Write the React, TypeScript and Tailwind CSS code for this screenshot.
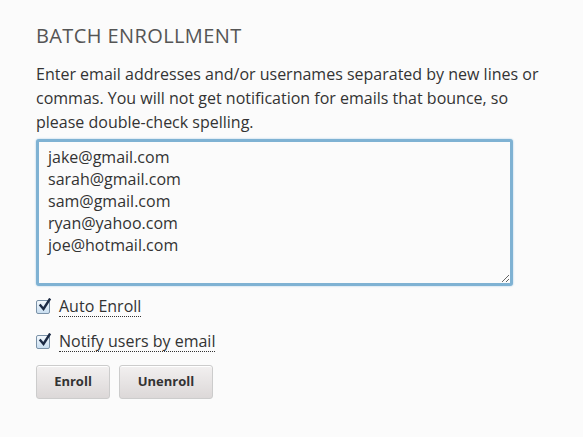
import { useState } from "react";

function Check({ checked }: { checked: boolean }) {
  return (
    <span className="relative inline-block w-[14px] h-[14px] rounded-[2px] border border-[#7b92a8] bg-gradient-to-b from-[#f4f9fd] to-[#c9def0] shrink-0">
      {checked && (
        <svg viewBox="0 0 14 14" className="absolute -top-[3px] left-[1px] w-[14px] h-[14px]">
          <path d="M2.5 7.5 L5.5 11 L11.5 1.5" fill="none" stroke="#1c2a44" strokeWidth="2.4" strokeLinecap="square" />
        </svg>
      )}
    </span>
  );
}

function Option({ label }: { label: string }) {
  const [on, setOn] = useState(true);
  return (
    <label className="flex items-center gap-[9px] cursor-pointer" onClick={() => setOn(!on)}>
      <Check checked={on} />
      <span className="border-b border-dotted border-[#333] leading-[20px] text-[16px] text-[#333]">{label}</span>
    </label>
  );
}

export default function App() {
  return (
    <div className="min-h-[437px] bg-[#fbfbfb] px-9 pt-[23px] font-['Open_Sans',sans-serif] text-[#333]">
      <h2 className="text-[20px] leading-[26px] tracking-[0.02em] text-[#555] uppercase">Batch Enrollment</h2>
      <p className="mt-[13px] text-[16px] leading-[24px] w-[512px]">
        Enter email addresses and/or usernames separated by new lines or commas. You will not get notification for emails that bounce, so please double-check spelling.
      </p>
      <textarea
        className="mt-[5px] block w-[477px] h-[147px] rounded-[3px] border-[3px] border-[#7fb2d3] bg-[#fbfbfb] px-[9px] pt-[4px] text-[16px] leading-[22px] text-[#333] outline-none shadow-[0_0_2px_#9cc5e2]"
        defaultValue={"jake@gmail.com\nsarah@gmail.com\nsam@gmail.com\nryan@yahoo.com\njoe@hotmail.com"}
      />
      <div className="mt-[10px] flex flex-col gap-[14px]">
        <Option label="Auto Enroll" />
        <Option label="Notify users by email" />
      </div>
      <div className="mt-[13px] flex gap-[9px]">
        <button className="h-[34px] w-[74px] rounded-[3px] border border-[#ccc] bg-gradient-to-b from-[#f2f0f0] to-[#dcd8d8] text-[13px] font-bold text-[#333] shadow-[inset_0_1px_0_#fff]">Enroll</button>
        <button className="h-[34px] w-[94px] rounded-[3px] border border-[#ccc] bg-gradient-to-b from-[#f2f0f0] to-[#dcd8d8] text-[13px] font-bold text-[#333] shadow-[inset_0_1px_0_#fff]">Unenroll</button>
      </div>
      <h2 className="mt-[33px] text-[20px] leading-[26px] tracking-[0.02em] text-[#555] uppercase">Batch Beta Tester Addition</h2>
    </div>
  );
}
